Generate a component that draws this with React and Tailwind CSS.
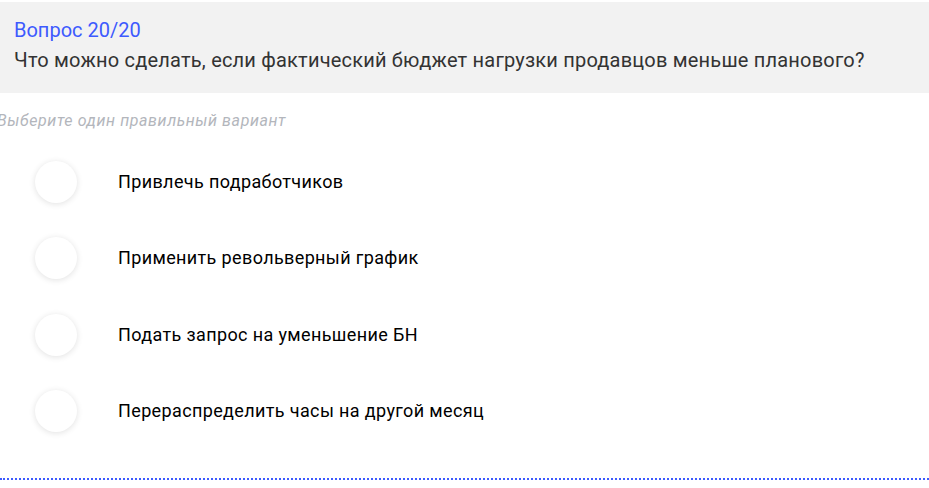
export default function App() {
  const options = [
    "Привлечь подработчиков",
    "Применить револьверный график",
    "Подать запрос на уменьшение БН",
    "Перераспределить часы на другой месяц",
  ];
  return (
    <div className="w-[929px] h-[488px] overflow-hidden bg-white font-['Roboto',sans-serif]">
      <div className="mt-[2px] h-[91px] bg-[#f2f2f2] px-[14px] pt-[16px]">
        <div className="text-[20px] leading-[24px] text-[#3d5afe]">Вопрос 20/20</div>
        <div className="mt-[6px] text-[20px] leading-[24px] tracking-[0.2px] text-[#333333]">
          Что можно сделать, если фактический бюджет нагрузки продавцов меньше планового?
        </div>
      </div>
      <div className="ml-[-3px] mt-[18px] text-[16px] leading-[20px] tracking-[0.6px] italic text-[#b3b6bc]">
        Выберите один правильный вариант
      </div>
      <div className="mt-[30px] flex flex-col gap-[34.33px] pl-[35px]">
        {options.map((o) => (
          <div key={o} className="flex items-center h-[42px]">
            <div className="w-[42px] h-[42px] rounded-full bg-white shadow-[0_1px_6px_rgba(0,0,0,0.12)] shrink-0" />
            <div className="ml-[41px] text-[18px] leading-[22px] tracking-[0.37px] text-black">{o}</div>
          </div>
        ))}
      </div>
      <div className="mt-[46px] border-b-2 border-dotted border-[#3d5afe]" />
    </div>
  );
}
